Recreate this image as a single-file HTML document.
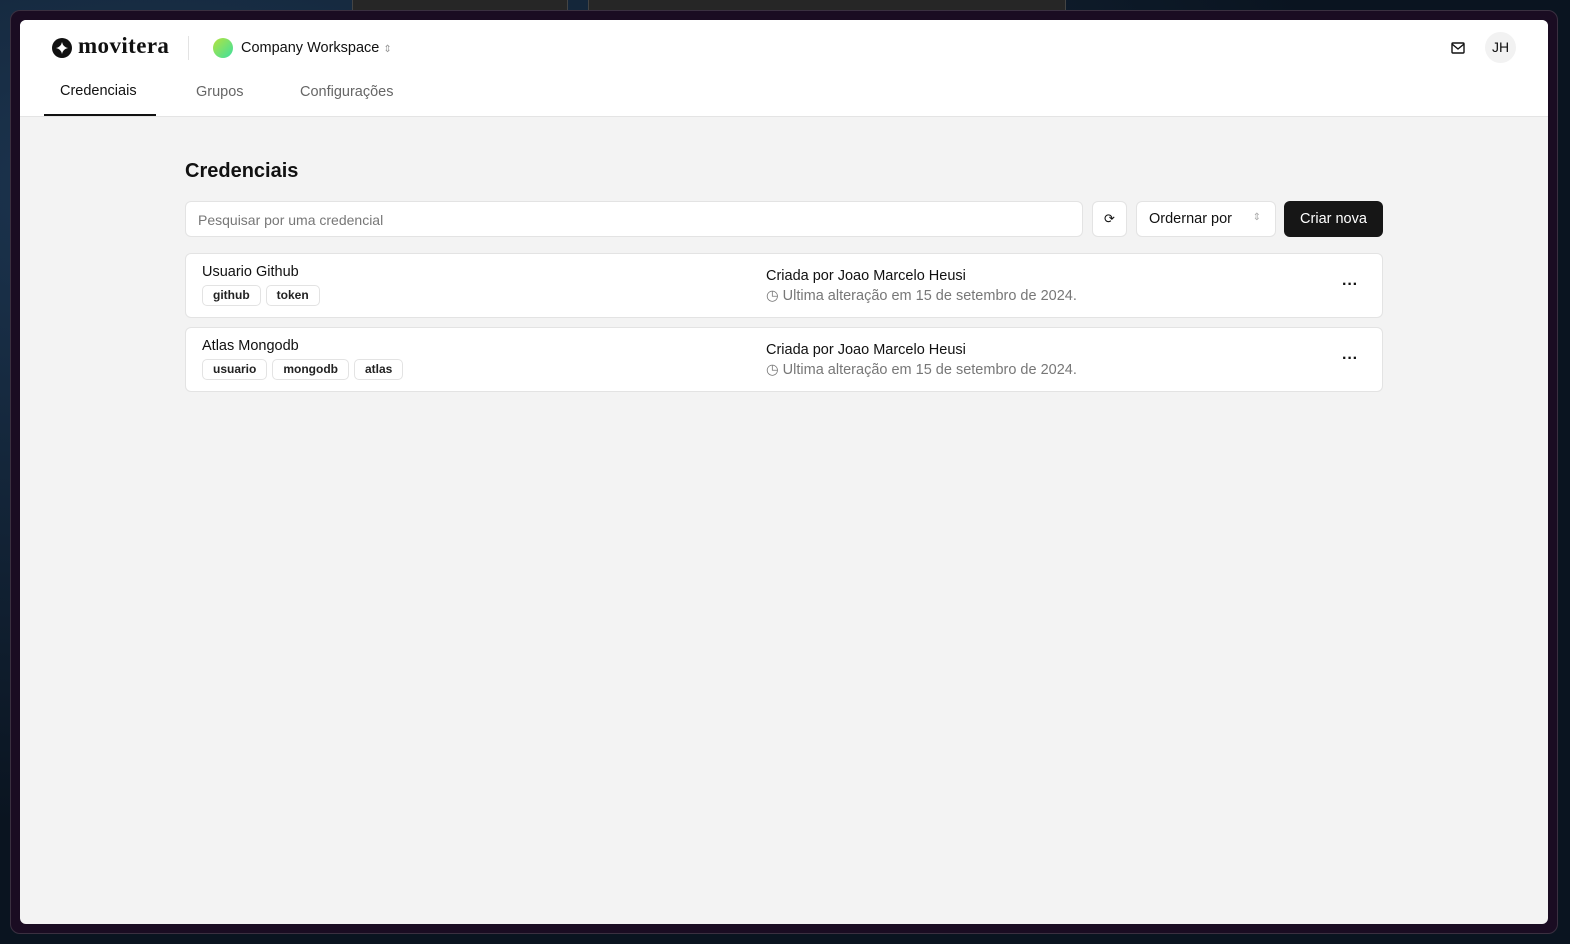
<!DOCTYPE html>
<html><head><meta charset="utf-8"><style>
*{box-sizing:border-box;margin:0;padding:0}
body{width:1570px;height:944px;overflow:hidden;background:#0d1a2a;font-family:"Liberation Sans",sans-serif;position:relative;color:#111}
.bg{position:absolute;inset:0;background:radial-gradient(ellipse at 10% 20%,#1c3550,#0a1420 60%),#0a1420}
.task{position:absolute;top:0;height:10px;background:#262626;border-left:1px solid #444;border-right:1px solid #444}
.frame{position:absolute;left:10px;top:10px;width:1548px;height:924px;background:#1a0c22;border:1px solid #3a3040;border-radius:10px}
.win{position:absolute;left:20px;top:20px;width:1528px;height:904px;background:#f3f3f3;border-radius:6px;overflow:hidden}
.hdr{position:absolute;left:0;top:0;width:100%;height:97px;background:#fff;border-bottom:1px solid #e4e4e4}
.abs{position:absolute}
.tab{position:absolute;top:64px;font-size:14.5px;color:#666}
.btn{position:absolute;background:#fff;border:1px solid #e3e3e3;border-radius:6px}
.card{position:absolute;left:165px;width:1198px;height:65px;background:#fff;border:1px solid #e3e3e3;border-radius:6px}
.tag{display:inline-block;height:21px;line-height:19px;padding:0 10px;border:1px solid #e3e3e3;border-radius:5px;font-size:12px;font-weight:bold;color:#222;margin-right:5px}
.t1{position:absolute;left:16px;top:10px;font-size:14.5px}
.tags{position:absolute;left:16px;top:31px}
.c1{position:absolute;left:580px;top:14px;font-size:14.5px}
.c2{position:absolute;left:580px;top:34px;font-size:14.5px;color:#777}
.dots{position:absolute;right:24px;top:22px;font-size:16px;font-weight:bold}
</style></head><body>
<div class="bg"></div>
<div class="task" style="left:352px;width:216px"></div>
<div class="task" style="left:588px;width:478px"></div>
<div class="frame"></div>
<div class="win">
 <div class="hdr">
  <svg class="abs" style="left:32px;top:18px" width="20" height="20" viewBox="0 0 20 20"><circle cx="10" cy="10" r="10" fill="#111"/><path d="M10 4 Q11 9 16 10 Q11 11 10 16 Q9 11 4 10 Q9 9 10 4Z" fill="#fff"/></svg>
  <div class="abs" style="left:58px;top:13px;font-family:'Liberation Serif',serif;font-weight:bold;font-size:23px;letter-spacing:0.4px;color:#111">movitera</div>
  <div class="abs" style="left:168px;top:16px;width:1px;height:24px;background:#e3e3e3"></div>
  <div class="abs" style="left:193px;top:18px;width:20px;height:20px;border-radius:50%;background:linear-gradient(135deg,#b5e33d,#3de0a0)"></div>
  <div class="abs" style="left:221px;top:20px;font-size:14.5px">Company Workspace <span style="color:#999;font-size:10px">⇕</span></div>
  <svg class="abs" style="left:1431px;top:22px" width="14" height="12" viewBox="0 0 14 12"><rect x="1" y="1" width="12" height="10" rx="1" fill="none" stroke="#111" stroke-width="1.4"/><path d="M1 2 L7 7 L13 2" fill="none" stroke="#111" stroke-width="1.4"/></svg>
  <div class="abs" style="left:1465px;top:12px;width:31px;height:31px;border-radius:50%;background:#f2f2f2;font-size:14px;line-height:31px;text-align:center">JH</div>
  <div class="tab" style="left:40px;top:63px;color:#111">Credenciais</div>
  <div class="abs" style="left:24px;top:94px;width:112px;height:2px;background:#111"></div>
  <div class="tab" style="left:176px">Grupos</div>
  <div class="tab" style="left:280px">Configurações</div>
 </div>
 <div class="abs" style="left:165px;top:140px;font-size:20px;font-weight:bold;color:#111">Credenciais</div>
 <div class="btn" style="left:165px;top:181px;width:898px;height:36px;padding:10px 12px;font-size:14px;color:#777">Pesquisar por uma credencial</div>
 <div class="btn" style="left:1072px;top:181px;width:35px;height:36px;text-align:center;line-height:34px;font-size:13px">⟳</div>
 <div class="btn" style="left:1116px;top:181px;width:140px;height:36px;padding:9px 12px;font-size:14.5px">Ordernar por <span style="position:absolute;right:14px;top:10px;color:#aaa;font-size:10px">⇕</span></div>
 <div class="abs" style="left:1264px;top:181px;width:99px;height:36px;background:#161616;border-radius:6px;color:#fff;font-size:14.5px;text-align:center;line-height:36px">Criar nova</div>
 <div class="card" style="top:233px">
  <div class="t1">Usuario Github</div>
  <div class="tags"><span class="tag">github</span><span class="tag">token</span></div>
  <div class="c1">Criada por Joao Marcelo Heusi</div>
  <div class="c2">◷ Ultima alteração em 15 de setembro de 2024.</div>
  <div class="dots">···</div>
 </div>
 <div class="card" style="top:307px">
  <div class="t1">Atlas Mongodb</div>
  <div class="tags"><span class="tag">usuario</span><span class="tag">mongodb</span><span class="tag">atlas</span></div>
  <div class="c1">Criada por Joao Marcelo Heusi</div>
  <div class="c2">◷ Ultima alteração em 15 de setembro de 2024.</div>
  <div class="dots">···</div>
 </div>
</div>
</body></html>
